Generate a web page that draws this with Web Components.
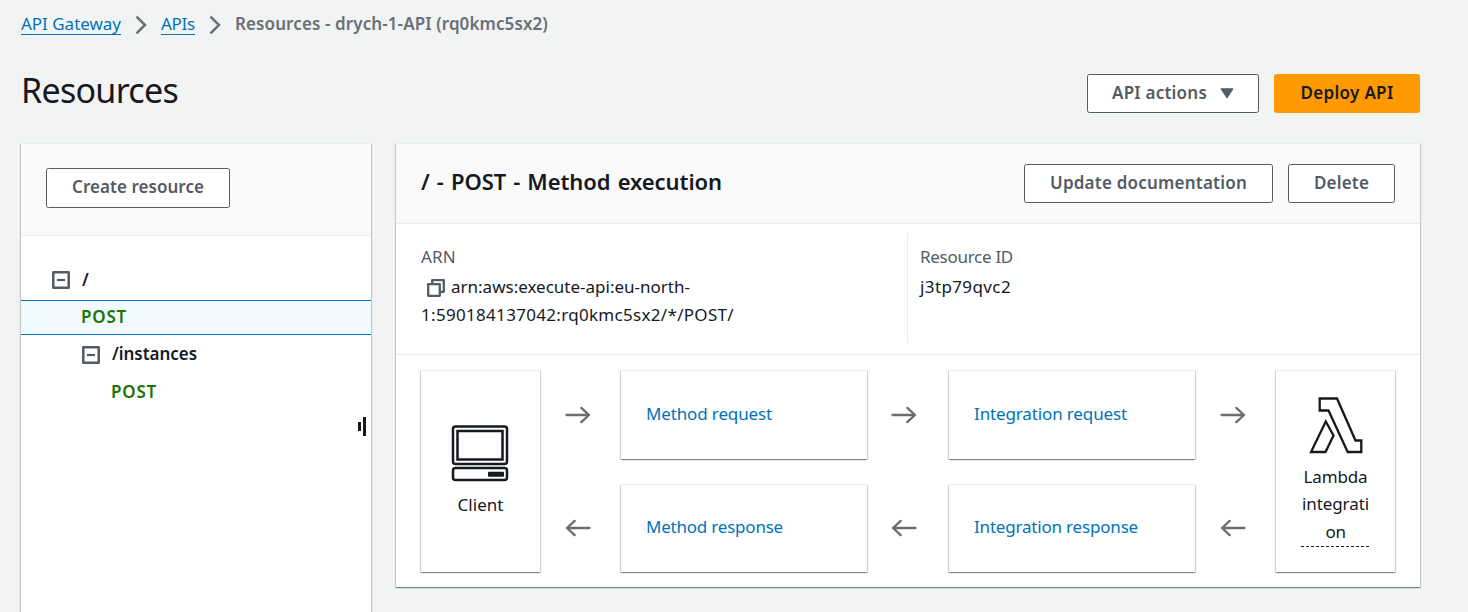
<!DOCTYPE html>
<html lang="en">
<head>
<meta charset="utf-8">
<title>API Gateway - Resources</title>
<style>
html,body{margin:0;height:100%;overflow:hidden}
body{background:#f2f3f3;color:#16191f;font:17px/28px "Noto Sans","Open Sans",sans-serif}
</style>
</head>
<body>
<api-page></api-page>
<script>
const define = (name, html, setup) => {
  const t = document.createElement('template');
  t.innerHTML = html;
  customElements.define(name, class extends HTMLElement {
    constructor() {
      super();
      this.attachShadow({mode: 'open'}).append(t.content.cloneNode(true));
    }
    connectedCallback() { if (setup) setup(this, this.shadowRoot); }
  });
};

/* One line of text whose tracking is adjusted so that it spans the given width. */
define('text-run', `<style>:host{display:inline-block;white-space:nowrap;vertical-align:top}span{display:inline-block}</style><span><slot></slot></span>`, (el, root) => {
  const w = +el.getAttribute('w'), s = root.querySelector('span');
  if (!w) return;
  const n = el.textContent.length, nat = s.getBoundingClientRect().width;
  const ls = (w - nat) / n;
  s.style.letterSpacing = ls.toFixed(3) + 'px';
  el.style.width = w + 'px';
});

define('crumb-link', `<style>:host{display:block;color:#0073bb;border-bottom:1px solid #0073bb;line-height:21px;height:21px}</style><slot></slot>`);
define('crumb-sep', `<style>:host{display:block;width:12px;height:20px}svg{display:block}</style>
<svg width="12" height="20" viewBox="0 0 12 20"><path d="M1.5 1.6 10 10 1.5 18.4" fill="none" stroke="#687078" stroke-width="2.5"/></svg>`);

define('ui-button', `<style>
:host{display:flex;align-items:center;justify-content:center;box-sizing:border-box;height:39px;border:1px solid #545b64;border-radius:2.5px;background:#fff;color:#545b64;font-weight:650;font-size:17px;line-height:24px;padding-bottom:1px}
:host([primary]){background:#ff9900;border-color:#ff9900;color:#16191f}
</style><slot></slot>`);

define('ui-panel', `<style>
:host{display:flex;flex-direction:column;background:#fff;border-top:1px solid #eaeded;box-sizing:border-box;box-shadow:0 1px 1px 0 rgba(0,28,36,.3),1px 1px 1px 0 rgba(0,28,36,.15),-1px 1px 1px 0 rgba(0,28,36,.15)}
</style><slot></slot>`);

define('tree-toggle', `<style>:host{display:block;width:18px;height:18px}svg{display:block}</style>
<svg width="18" height="18" viewBox="0 0 18 18"><path d="M1.3 1.3h15.4v15.4H1.3z" fill="none" stroke="#545b64" stroke-width="2.5" stroke-linejoin="round"/><path d="M5 9h8" stroke="#545b64" stroke-width="2.2"/></svg>`);

define('tree-row', `<style>
:host{display:flex;align-items:center;gap:12px;box-sizing:border-box;font-weight:650;font-size:17px;line-height:24px}
:host([method]){color:#1d7400}
:host([selected]){background:#f1faff;border-top:1px solid #0073bb;border-bottom:1px solid #0073bb}
</style><slot></slot>`);

define('resource-tree', `<style>
:host{display:flex;flex-direction:column;flex:1}
.r1{height:40px;margin-top:24px;padding-left:31px}
.r2{height:35px;padding:0 0 1px 60px}
.r3{height:39px;padding-left:61px}
.r3 text-run{margin-top:-1px}
.r4{height:36px;padding-left:90px}
.grip{display:flex;align-items:center;justify-content:flex-end;gap:2px;margin-top:7px;padding-right:5px;height:19px}
.grip i{width:3px;background:#16191f}
.grip .a{height:9px}.grip .b{height:19px}
</style>
<tree-row class="r1"><tree-toggle></tree-toggle><text-run>/</text-run></tree-row>
<tree-row class="r2" method selected><text-run w="46">POST</text-run></tree-row>
<tree-row class="r3"><tree-toggle></tree-toggle><text-run w="85">/instances</text-run></tree-row>
<tree-row class="r4" method><text-run w="46">POST</text-run></tree-row>
<div class="grip"><i class="a"></i><i class="b"></i></div>`);

define('flow-arrow', `<style>:host{display:flex;align-items:center;justify-content:center;padding:0 6px 0 0}:host([back]) svg{transform:scaleX(-1)}</style>
<svg width="26" height="18" viewBox="0 0 26 18"><path d="M1.500 9h22.500M16.300 1.900 24 9l-7.700 7.100" fill="none" stroke="#6b6c72" stroke-width="2.300" stroke-linecap="round" stroke-linejoin="round"/></svg>`);

define('flow-box', `<style>
:host{display:flex;align-items:center;box-sizing:border-box;background:#fff;border-top:1px solid #eaeded;color:#0073bb;padding:0 0 3px 25px;box-shadow:0 1px 1px 0 rgba(0,28,36,.3),1px 1px 1px 0 rgba(0,28,36,.15),-1px 1px 1px 0 rgba(0,28,36,.15)}
:host([tall]){flex-direction:column;color:#16191f;padding:0}
</style><slot></slot>`);

define('method-flow', `<style>
:host{display:grid;grid-template-columns:119px 81px 246px 82px 246px 81px 119px;grid-template-rows:89px 88px;row-gap:25px;margin:15px 25px 15px}
svg{display:block}
.first{grid-area:1/1/3/2}
.last{grid-area:1/7/3/8}
.pc{margin:54px 2px 0 0}.pc+text-run{margin-top:9px}
.lam{margin:25px 0 0 1px}
.name{display:flex;flex-direction:column;align-items:center;width:69px;margin-top:9px;line-height:27.400px;height:83px}
.dash{width:70px;height:1px;background:repeating-linear-gradient(90deg,#16191f 0 3px,transparent 3px 5px)}
.mid{padding-right:8px}
</style>
<flow-box tall class="first">
<svg class="pc" width="58" height="57" viewBox="0 0 58 57" fill="none" stroke="#16191f"><rect x="2" y="1.500" width="54" height="37.500" rx="2.500" stroke-width="2.500"/><rect x="6.500" y="6" width="45" height="28.500" stroke-width="2.500"/><rect x="2" y="43" width="54" height="12" rx="2.500" stroke-width="2.500"/><rect x="37" y="46.700" width="16" height="5" rx="1" fill="#16191f" stroke="none"/></svg>
<text-run w="46">Client</text-run>
</flow-box>
<flow-arrow></flow-arrow>
<flow-box><text-run w="126">Method request</text-run></flow-box>
<flow-arrow class="mid"></flow-arrow>
<flow-box><text-run w="153">Integration request</text-run></flow-box>
<flow-arrow></flow-arrow>
<flow-box tall class="last">
<svg class="lam" width="54" height="58" viewBox="0 0 54 58" fill="none" stroke="#16191f" stroke-width="2.300"><path d="M10.700 2.500H28L46.500 44.500h5.800V56H38.700L19.500 14.500h-8.800z"/><path d="M16.800 25.500 24.500 39.500 16.500 56H2z"/></svg>
<div class="name"><text-run w="64">Lambda</text-run><text-run w="67">integrati</text-run><text-run w="20">on</text-run></div>
<div class="dash"></div>
</flow-box>
<flow-arrow back></flow-arrow>
<flow-box><text-run w="137">Method response</text-run></flow-box>
<flow-arrow back class="mid"></flow-arrow>
<flow-box><text-run w="164">Integration response</text-run></flow-box>
<flow-arrow back></flow-arrow>`);

define('method-details', `<style>
:host{display:flex;height:131px;box-sizing:border-box;border-bottom:1px solid #eaeded;padding:9px 25px 11px}
.c{display:flex;flex-direction:column;box-sizing:border-box}
.c1{width:487px;border-right:1px solid #eaeded}
.c2{padding-left:12px}
.label{color:#545b64;line-height:28px;margin-top:10px;height:30px}
.line{display:flex;height:28px}
svg{margin:6px 6px 0 6px}
</style>
<div class="c c1"><div class="label"><text-run w="35">ARN</text-run></div>
<div class="line"><svg width="18" height="18" viewBox="0 0 18 18" fill="none" stroke="#545b64" stroke-width="2.300" stroke-linejoin="round"><path d="M1.200 5.200h11.600v11.600H1.200z"/><path d="M5.200 5V1.200h11.600v11.600H13"/></svg><text-run w="239">arn:aws:execute-api:eu-north-</text-run></div>
<div class="line"><text-run w="313">1:590184137042:rq0kmc5sx2/*/POST/</text-run></div></div>
<div class="c c2"><div class="label"><text-run w="93">Resource ID</text-run></div><div class="line"><text-run w="91">j3tp79qvc2</text-run></div></div>`);

define('api-page', `<style>
:host{display:flex;flex-direction:column;height:612px;overflow:hidden;padding:0 48px 0 20px;box-sizing:border-box}
nav{display:flex;flex:none;height:35px;padding:13px 0 0 1px;box-sizing:border-box;line-height:21px}
nav crumb-sep{margin:2px 14px 0 14px}
nav b{color:#687078;font-weight:650}
header{display:flex;justify-content:space-between;height:108px;flex:none;padding-left:1px}
h1{margin:32px 0 0;font-weight:400;font-size:34px;line-height:46px}
.btns{display:flex;gap:15px;padding-top:39px}
.tri{margin:1px 0 0 13px}
main{display:flex;gap:25px;height:469px;padding-left:1px}
.left{width:350px;height:469px;flex:none;box-shadow:1px 1px 1px 0 rgba(0,28,36,.2),-1px 1px 1px 0 rgba(0,28,36,.2)}
.right{width:1024px;height:444px;flex:none}
.lh{background:#fafafa;border-bottom:1px solid #eaeded;height:92px;box-sizing:border-box;padding:24px 25px}
.rh{background:#fafafa;border-bottom:1px solid #eaeded;height:80px;box-sizing:border-box;padding:20px 25px;display:flex;justify-content:space-between}
h2{margin:2px 0 0;font-size:22px;line-height:30px;font-weight:650;word-spacing:1.500px}
</style>
<nav><crumb-link><text-run w="100">API Gateway</text-run></crumb-link><crumb-sep></crumb-sep><crumb-link><text-run w="34">APIs</text-run></crumb-link><crumb-sep></crumb-sep><b><text-run w="313">Resources - drych-1-API (rq0kmc5sx2)</text-run></b></nav>
<header><h1><text-run w="157">Resources</text-run></h1>
<div class="btns"><ui-button style="width:172px"><text-run w="95">API actions</text-run><svg class="tri" width="14" height="11" viewBox="0 0 14 11"><path d="M1 .8h12L7 10z" fill="#545b64" stroke="#545b64" stroke-linejoin="round"/></svg></ui-button><ui-button primary style="width:146px"><text-run w="93">Deploy API</text-run></ui-button></div></header>
<main>
<ui-panel class="left"><div class="lh"><ui-button style="width:184px;height:40px;padding-bottom:2px"><text-run w="132">Create resource</text-run></ui-button></div><resource-tree></resource-tree></ui-panel>
<ui-panel class="right"><div class="rh"><h2><text-run w="301">/ - POST - Method execution</text-run></h2><div class="btns" style="padding:0"><ui-button style="width:249px"><text-run w="197">Update documentation</text-run></ui-button><ui-button style="width:107px"><text-run w="55">Delete</text-run></ui-button></div></div><method-details></method-details><method-flow></method-flow></ui-panel>
</main>`);
</script>
</body>
</html>
